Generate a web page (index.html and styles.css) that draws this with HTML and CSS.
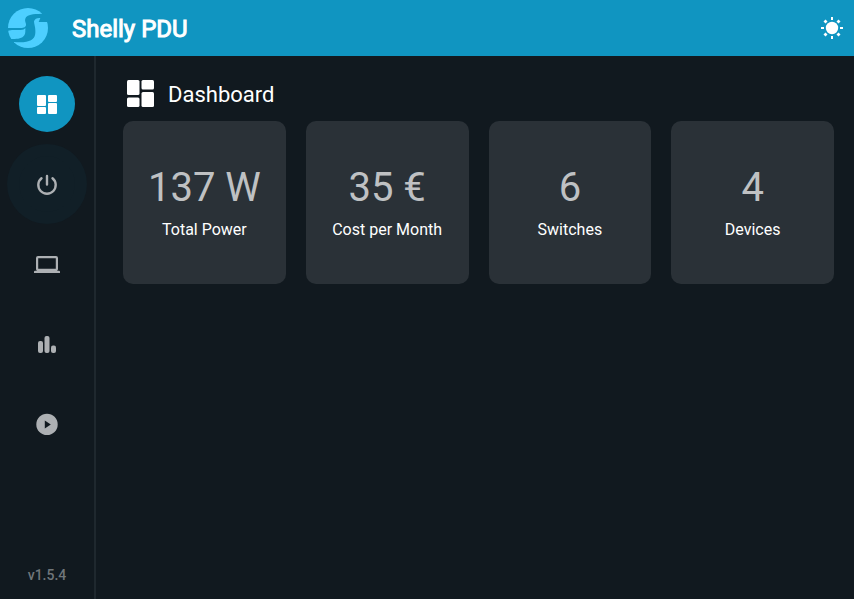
FILE: index.html
```html
<!DOCTYPE html>
<html lang="en">
<head>
<meta charset="utf-8">
<meta name="viewport" content="width=device-width, initial-scale=1">
<title>Shelly PDU</title>
<link rel="stylesheet" href="styles.css">
</head>
<body>
<header class="topbar">
  <svg class="logo" viewBox="0 0 120 120" aria-hidden="true">
    <clipPath id="disc"><circle cx="60" cy="60" r="60"/></clipPath>
    <g clip-path="url(#disc)">
      <path d="M0 60H38C48 60 55 57 54 48C52 41 49 36 54 28C60 20 72 18 102 17V0H0z"/>
      <path d="M120 42H92L97 30C88 29 80 32 78 40C78 48 82 56 82 67C83 86 78 97 55 101C43 104 30 103 18 102V120H120z"/>
      <path d="M0 68L12 66H38C46 66 49 63 52 60C52 68 53 76 49 82C43 92 30 93 15 93H0z"/>
    </g>
  </svg>
  <h1 class="brand">Shelly PDU</h1>
  <button class="theme" type="button" aria-label="Toggle theme">
    <svg viewBox="0 0 24 24" aria-hidden="true"><circle cx="12" cy="12" r="6.2"/><path d="M11 1h2v3h-2zM11 20h2v3h-2zM1 11h3v2H1zM20 11h3v2h-3zM3.500 5.500l2-2 2 2-2 2zM16.500 5.500l2-2 2 2-2 2zM16.500 18.500l2-2 2 2-2 2zM3.500 18.500l2-2 2 2-2 2z"/></svg>
  </button>
</header>
<div class="shell">
  <nav class="sidebar" aria-label="Main">
    <a class="item active" href="#dashboard" aria-label="Dashboard"><svg viewBox="0 0 24 24" aria-hidden="true"><rect x="2" y="3" width="9" height="11" rx="1"/><rect x="13" y="3" width="9" height="7" rx="1"/><rect x="2" y="15" width="9" height="7" rx="1"/><rect x="13" y="11" width="9" height="11" rx="1"/></svg></a>
    <a class="item hover" href="#power" aria-label="Power"><svg viewBox="0 0 24 24" aria-hidden="true"><path class="line" stroke-width="2.4" d="M12 4v8.500M6.500 6.300a8.700 8.700 0 1 0 11 0"/></svg></a>
    <a class="item" href="#devices" aria-label="Devices"><svg class="wide" viewBox="0 0 26 24" aria-hidden="true"><path fill-rule="evenodd" d="M4 4h18a2 2 0 0 1 2 2v11a2 2 0 0 1-1 1.700h2a1 1 0 0 1 1 1V21H0v-1.300a1 1 0 0 1 1-1h2A2 2 0 0 1 2 17V6a2 2 0 0 1 2-2zM4.200 6.200v10.600h17.600V6.200z"/></svg></a>
    <a class="item" href="#statistics" aria-label="Statistics"><svg viewBox="0 0 24 24" aria-hidden="true"><rect x="3" y="9" width="5" height="12" rx="2"/><rect x="9.500" y="4" width="5" height="17" rx="2"/><rect x="16" y="13.500" width="5" height="7.500" rx="2"/></svg></a>
    <a class="item" href="#scenes" aria-label="Scenes"><svg viewBox="0 0 24 24" aria-hidden="true"><path fill-rule="evenodd" d="M12 1.700a10.700 10.700 0 1 0 0 21.400a10.700 10.700 0 0 0 0-21.400zM9.800 8.400l6 4-6 4z"/></svg></a>
    <span class="version">v1.5.4</span>
  </nav>
  <main class="content">
    <div class="heading">
      <svg viewBox="0 0 28 28" aria-hidden="true"><rect x="0" y="0" width="12.500" height="15" rx="1.500"/><rect x="14.500" y="0" width="12.500" height="9.500" rx="1.500"/><rect x="0" y="17.500" width="12.500" height="9.500" rx="1.500"/><rect x="14.500" y="12" width="12.500" height="15" rx="1.500"/></svg>
      <h2>Dashboard</h2>
    </div>
    <section class="cards">
      <article class="card"><strong>137 W</strong><span>Total Power</span></article>
      <article class="card"><strong>35 €</strong><span>Cost per Month</span></article>
      <article class="card"><strong>6</strong><span>Switches</span></article>
      <article class="card"><strong>4</strong><span>Devices</span></article>
    </section>
  </main>
</div>
</body>
</html>
```
FILE: styles.css
```css
* { box-sizing: border-box; }
body {
  margin: 0;
  min-height: 100vh;
  display: flex;
  flex-direction: column;
  background: #11191f;
  color: #fff;
  font-family: Roboto, "Liberation Sans", sans-serif;
}
svg { display: block; fill: currentColor; }
.topbar {
  height: 56px;
  display: flex;
  align-items: center;
  padding: 0 8px;
  background: #1095c1;
}
.logo { width: 40px; height: 40px; fill: #4dcfff; }
.brand {
  margin: 0 auto 0 24px;
  padding-top: 2px;
  font-size: 24px;
  line-height: 32px;
  font-weight: 400;
  -webkit-text-stroke: 1px #fff;
}
.theme {
  padding: 2px;
  border: 0;
  background: none;
  color: #fff;
}
.theme svg { width: 24px; height: 24px; }
.shell { flex: 1; display: flex; }
.sidebar {
  flex: none;
  width: 96px;
  display: flex;
  flex-direction: column;
  align-items: center;
  gap: 24px;
  padding: 20px 0 14px;
  border-right: 2px solid #1f282e;
}
.item {
  width: 56px;
  height: 56px;
  display: grid;
  place-items: center;
  border-radius: 50%;
  color: #adb0b3;
}
.item svg { width: 24px; height: 24px; }
.item svg.wide { width: 26px; }
.item .line { fill: none; stroke: currentColor; stroke-linecap: round; }
.active { background: #1095c1; color: #fff; }
.hover { background: #111f27; box-shadow: 0 0 0 12px #111f27; }
.version {
  margin-top: auto;
  color: #70767a;
  font-size: 14px;
  line-height: 20px;
  font-weight: 500;
}
.content { flex: 1; min-width: 0; padding: 24px 20px 24px 27px; }
.heading { display: flex; align-items: flex-start; gap: 13px; padding-left: 4px; margin-bottom: 12px; }
.heading svg { width: 28px; height: 28px; }
h2 { margin: 0; padding-top: 1px; font-size: 22px; line-height: 28px; font-weight: 400; }
.cards { display: grid; grid-template-columns: repeat(4, minmax(0, 1fr)); gap: 20px; }
.card {
  min-width: 0;
  aspect-ratio: 1;
  display: flex;
  flex-direction: column;
  align-items: center;
  justify-content: center;
  gap: 8px;
  border-radius: 10px;
  background: #2a3137;
}
.card strong { color: #bfc1c3; font-size: 40px; line-height: 48px; font-weight: 400; }
.card span { font-size: 16px; line-height: 20px; }
```
